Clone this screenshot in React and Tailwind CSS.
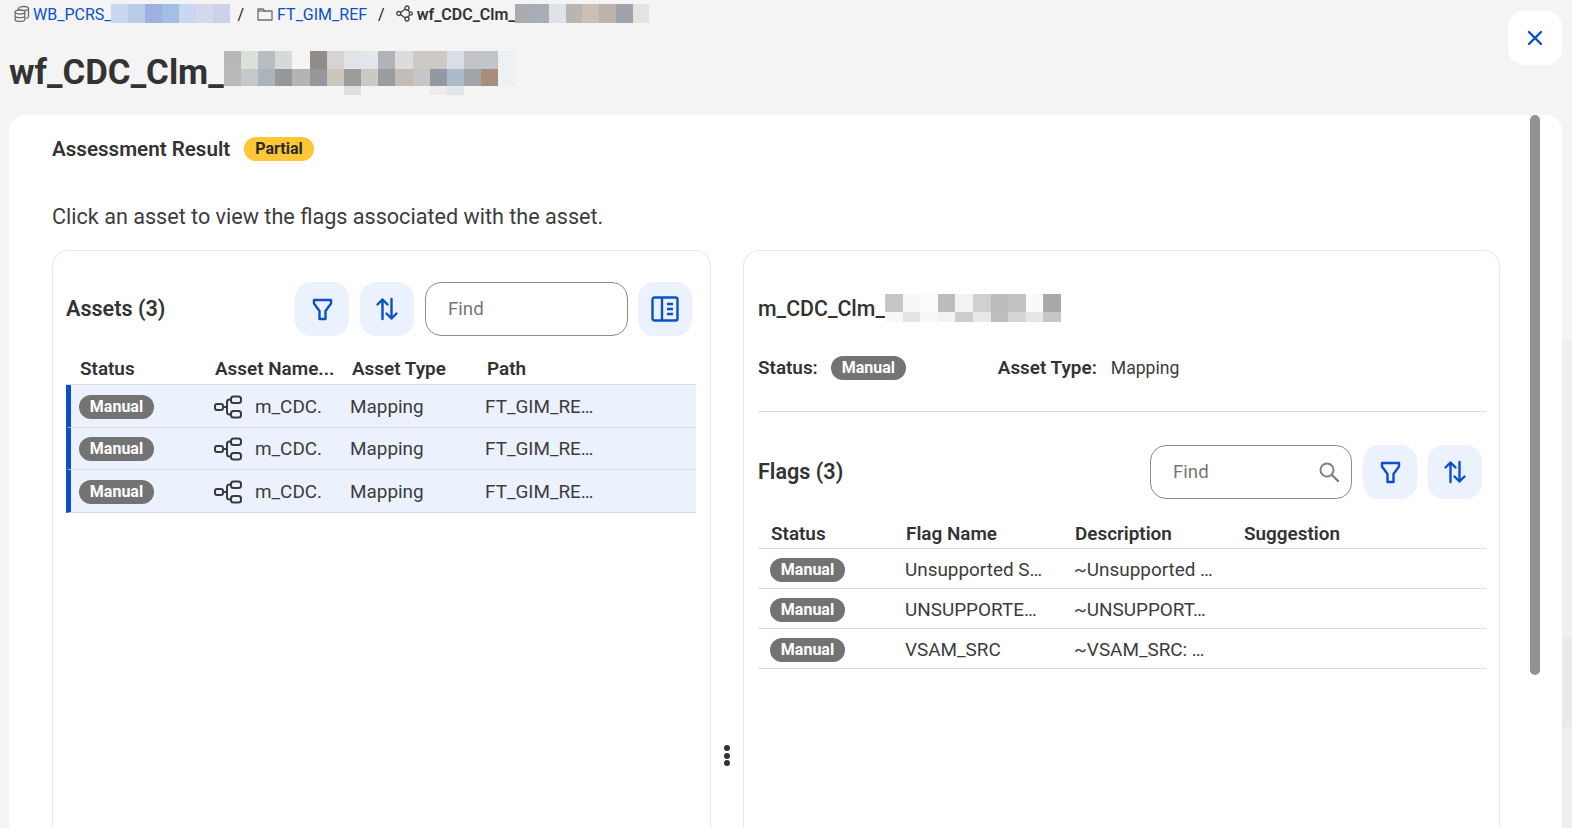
import React from 'react';
import { X } from 'lucide-react';

const titleRows = [
  ['#b7b7b5', '#dbe0d9', '#b6bec0', '#d6d8da', '#f4f4f4', '#918c88', '#d5d3d4', '#e0e3e8', '#e3e6ec', '#b2b3b8', '#dcdcdc', '#cdc9c5', '#cdcac6', '#d8dfe6', '#c2c4c8', '#c0c5c9', '#eef1f4'],
  ['#b9b9b7', '#c4cacc', '#a9b5ba', '#96979b', '#b3b4b6', '#97989a', '#cdc6bb', '#9b9b9b', '#cbc9c2', '#9a9ca0', '#c3bdb5', '#c5c6c8', '#9598a2', '#aabccb', '#a3a5ad', '#a98f7b', '#eef1f4'],
  ['#f4f4f4', '#f4f4f4', '#f4f4f4', '#f4f4f4', '#f4f4f4', '#f4f4f4', '#f4f4f4', '#dedede', '#f4f4f4', '#f4f4f4', '#f4f4f4', '#f4f4f4', '#efebe8', '#e1e4e8', '#f4f4f4', '#f4f4f4', '#f4f4f4'],
];
const titleHeights = ['h-[18px]', 'h-[17px]', 'h-[9px]'];
const crumbOne = ['#c8d8f0', '#b9cde8', '#9db0e0', '#a0c0e8', '#c8d8f0', '#d4d8ea', '#ccd2ea'];
const crumbTwo = ['#a9abb0', '#a8aeb8', '#dfe3e6', '#b9b6b2', '#cdbfb3', '#bdb3aa', '#a0a2ab', '#e4e3df'];
const nameRows = [
  ['#c6c6c6', '#f8f8f8', '#fbfbfb', '#bcbcbc', '#f2f2f2', '#d0d0d0', '#bbbbbb', '#c2c2c2', '#fafafa', '#a9a9a9'],
  ['#f8f8f8', '#e4e4e4', '#f8f8f8', '#f2f2f2', '#cdcdcd', '#e8e8e8', '#bebebe', '#d6d6d6', '#e6e6e6', '#c6c6c6'],
];

const flags = [
  ['Unsupported S…', '~Unsupported …'],
  ['UNSUPPORTE…', '~UNSUPPORT…'],
  ['VSAM_SRC', '~VSAM_SRC: …'],
];

// pixelated patch that hides part of a name
const Blur = ({ colors, className }) => (
  <span className={`flex ${className}`}>
    {colors.map((c, i) => (
      <span key={i} className="flex-1 h-full" style={{ backgroundColor: c }} />
    ))}
  </span>
);

const FilterIcon = () => (
  <svg width="21" height="23" viewBox="0 0 21 23" fill="none" stroke="#0b50c9" strokeWidth="2.4" strokeLinejoin="round">
    <path d="M2 2h17v3.500l-5.500 7.500v8h-6v-8L2 5.500z" />
  </svg>
);

const SortIcon = () => (
  <svg width="24" height="24" viewBox="0 0 24 24" fill="none" stroke="#0b50c9" strokeWidth="2.4" strokeLinecap="round" strokeLinejoin="round">
    <path d="M7.500 22V2.500M2.500 7.500l5-5 5 5" />
    <path d="M16.500 2v19.500M11.500 16.500l5 5 5-5" />
  </svg>
);

const PanelIcon = () => (
  <svg width="28" height="26" viewBox="0 0 28 26" fill="none" stroke="#0b50c9" strokeWidth="2.4">
    <rect x="1.500" y="1.500" width="25" height="23" rx="2" />
    <path d="M11 1.500v23M16 8h6M16 13h6M16 18h6" />
  </svg>
);

const MappingIcon = () => (
  <svg width="28" height="24" viewBox="0 0 28 24" fill="none" stroke="#3a3a3a" strokeWidth="2">
    <rect x="1" y="9" width="8" height="6" rx="2" />
    <rect x="17" y="1.500" width="10" height="6.500" rx="2.500" />
    <rect x="17" y="16" width="10" height="6.500" rx="2.500" />
    <path d="M9 12h4M17 4.500h-1.500a2.500 2.500 0 0 0-2.500 2.500v10a2.500 2.500 0 0 0 2.500 2.500H17" />
  </svg>
);

const SearchIcon = () => (
  <svg width="20" height="20" viewBox="0 0 20 20" fill="none" stroke="#808080" strokeWidth="2" strokeLinecap="round" className="absolute right-[12px] top-[16px]">
    <circle cx="8" cy="8" r="6.500" />
    <path d="M13 13l6 6" strokeWidth="2.400" />
  </svg>
);

const DbIcon = () => (
  <svg width="16" height="17" viewBox="0 0 16 17" fill="none" stroke="#6f6f6f" strokeWidth="1.300">
    <ellipse cx="9.500" cy="3.500" rx="5" ry="2" />
    <path d="M14.500 3.500v8c0 .8-1 1.500-2.500 1.800M4.500 3.500v2" />
    <ellipse cx="6" cy="7" rx="4.800" ry="2" fill="#f4f4f4" />
    <path d="M1.200 7v7.500c0 1.100 2.100 2 4.800 2s4.800-.9 4.800-2V7M1.200 10.700c0 1.100 2.100 2 4.800 2s4.800-.9 4.800-2" />
  </svg>
);

const FolderIcon = () => (
  <svg width="16" height="14" viewBox="0 0 16 14" fill="none" stroke="#6f6f6f" strokeWidth="1.300" strokeLinejoin="round">
    <path d="M1 2h5l1.500 2H15v9H1z" />
    <path d="M1 4h6.500" />
  </svg>
);

const FlowIcon = () => (
  <svg width="17" height="17" viewBox="0 0 17 17" fill="none" stroke="#444444" strokeWidth="1.300">
    <circle cx="2.800" cy="8.500" r="2" />
    <circle cx="11" cy="3" r="2" />
    <circle cx="11" cy="14" r="2" />
    <circle cx="14.700" cy="8.500" r="1.600" />
    <path d="M4.600 7.500L9.300 4M4.600 9.500l4.700 3.500M12 4.800l1.700 2.300M12 12.200l1.700-2.300" />
  </svg>
);

const Pill = () => (
  <span className="inline-flex items-center justify-center w-[75px] h-[24px] rounded-full bg-[#737373] text-white text-[16px] font-bold">
    Manual
  </span>
);

const IconButton = ({ children }) => (
  <button className="w-[54px] h-[54px] shrink-0 rounded-2xl bg-[#ebf1fd] flex items-center justify-center">
    {children}
  </button>
);

const Heading = ({ children, className = '' }) => (
  <span className={`text-[18.900px] font-semibold text-[#333333] whitespace-nowrap ${className}`}>{children}</span>
);

export default function App() {
  return (
    <div className="relative w-[1572px] h-[828px] overflow-hidden bg-[#f4f4f4] font-['Roboto',sans-serif] text-[#3c3c3c] flex flex-col pl-[9px]">
      {/* Breadcrumb */}
      <div className="h-[29px] flex items-start pt-[4px] text-[16px] leading-[19px] shrink-0">
        <span className="flex items-center h-[19px] pl-[5px]">
          <DbIcon />
          <span className="ml-[3px] pt-[2px] text-[#0b50c9]">WB_PCRS_</span>
          <Blur colors={crumbOne} className="w-[119px] h-[19px]" />
        </span>
        <span className="h-[19px] ml-[7px] mr-[13px] pt-[1px] text-[#222222]">/</span>
        <span className="flex items-center h-[19px]">
          <FolderIcon />
          <span className="ml-[4px] pt-[2px] text-[#0b50c9]">FT_GIM_REF</span>
        </span>
        <span className="h-[19px] ml-[11px] mr-[11px] pt-[1px] text-[#222222]">/</span>
        <span className="flex items-center h-[19px]">
          <FlowIcon />
          <span className="ml-[4px] pt-[2px] font-semibold text-[#333333]">wf_CDC_Clm_</span>
          <Blur colors={crumbTwo} className="w-[134px] h-[19px]" />
        </span>
      </div>

      {/* Title */}
      <div className="h-[86px] shrink-0 flex items-start justify-between pr-[10px]">
        <div className="flex items-start pt-[21px]">
          <span className="text-[34.800px] font-bold leading-[44px] text-[#333333]">wf_CDC_Clm_</span>
          <span className="flex flex-col w-[292px] mt-[1px]">
            {titleRows.map((r, i) => (
              <Blur key={i} colors={r} className={titleHeights[i]} />
            ))}
          </span>
        </div>
        <button className="w-[54px] h-[54px] -mt-[18px] rounded-2xl bg-white flex items-center justify-center">
          <X size={24} color="#0b50c9" strokeWidth={2.4} />
        </button>
      </div>

      {/* Card */}
      <div className="relative w-[1553px] flex-1 bg-white rounded-t-2xl pt-[21px] pl-[43px] flex flex-col min-h-0">
        <div className="flex items-center h-[26px]">
          <span className="text-[20.600px] font-semibold text-[#333333]">Assessment Result</span>
          <span className="ml-[14px] h-[24px] px-[11px] rounded-full bg-[#fdc735] text-[#2b2b2b] text-[16px] font-bold flex items-center">
            Partial
          </span>
        </div>
        <p className="mt-[41px] text-[21.600px] leading-[28px] text-[#3c3c3c]">Click an asset to view the flags associated with the asset.</p>

        <div className="mt-[19px] flex flex-1 min-h-0">
          {/* Assets panel */}
          <div className="w-[659px] shrink-0 border border-b-0 border-[#e8e8e8] rounded-t-2xl pt-[31px] pl-[13px]">
            <div className="flex items-center h-[54px]">
              <span className="w-[229px] text-[21.600px] font-semibold text-[#333333]">Assets (3)</span>
              <IconButton><FilterIcon /></IconButton>
              <span className="w-[11px]" />
              <IconButton><SortIcon /></IconButton>
              <span className="w-[11px]" />
              <div className="w-[203px] h-[54px] rounded-2xl border border-[#8c8c8c] flex items-center pl-[22px] text-[18.670px] text-[#767676]">Find</div>
              <span className="w-[10px]" />
              <IconButton><PanelIcon /></IconButton>
            </div>
            <div className="w-[630px]">
              <div className="grid grid-cols-[135px_137px_135px_1fr] h-[49px] items-end pb-[1px] pl-[14px] border-b border-[#dcdcdc]">
                <Heading>Status</Heading>
                <Heading>Asset Name...</Heading>
                <Heading>Asset Type</Heading>
                <Heading>Path</Heading>
              </div>
              {[0, 1, 2].map((i) => (
                <div key={i} className="grid grid-cols-[135px_136px_135px_1fr] items-center h-[42.500px] pt-[2px] pl-[8px] bg-[#ebf1fd] border-l-[5px] border-l-[#0b50c9] border-b border-b-[#dcdcdc] text-[18.900px]">
                  <Pill />
                  <span className="flex items-center">
                    <MappingIcon />
                    <span className="ml-[13px]">m_CDC.</span>
                  </span>
                  <span>Mapping</span>
                  <span>FT_GIM_RE…</span>
                </div>
              ))}
            </div>
          </div>

          {/* Splitter */}
          <div className="w-[32px] shrink-0 flex flex-col items-center gap-[1.500px] pt-[495px]">
            <span className="w-[6px] h-[6px] rounded-full bg-[#333333]" />
            <span className="w-[6px] h-[6px] rounded-full bg-[#333333]" />
            <span className="w-[6px] h-[6px] rounded-full bg-[#333333]" />
          </div>

          {/* Detail panel */}
          <div className="w-[757px] shrink-0 border border-b-0 border-[#e8e8e8] rounded-t-2xl pl-[14px] pr-[13px] pt-[43px]">
            <div className="flex items-start h-[31px]">
              <span className="text-[21.330px] font-medium leading-[30px] text-[#333333]">m_CDC_Clm_</span>
              <span className="flex flex-col w-[176px]">
                {nameRows.map((r, i) => (
                  <Blur key={i} colors={r} className={i === 0 ? 'h-[18px]' : 'h-[10px]'} />
                ))}
              </span>
            </div>
            <div className="flex items-center mt-[30px] h-[26px] pb-0">
              <Heading>Status:</Heading>
              <span className="ml-[13px] w-[167px]"><Pill /></span>
              <Heading>Asset Type:</Heading>
              <span className="ml-[14px] text-[17.600px]">Mapping</span>
            </div>
            <div className="mt-[30px] border-t border-[#dcdcdc]" />

            <div className="flex items-center h-[54px] mt-[33px] pr-[4px]">
              <span className="flex-1 text-[21.600px] font-semibold text-[#333333]">Flags (3)</span>
              <div className="relative w-[202px] h-[54px] rounded-2xl border border-[#8c8c8c] flex items-center pl-[22px] text-[18.670px] text-[#767676]">
                Find
                <SearchIcon />
              </div>
              <span className="w-[11px]" />
              <IconButton><FilterIcon /></IconButton>
              <span className="w-[11px]" />
              <IconButton><SortIcon /></IconButton>
            </div>

            <div className="grid grid-cols-[135px_169px_169px_1fr] h-[50px] items-end pl-[13px] border-b border-[#dcdcdc]">
              <Heading>Status</Heading>
              <Heading>Flag Name</Heading>
              <Heading>Description</Heading>
              <Heading>Suggestion</Heading>
            </div>
            {flags.map((f, i) => (
              <div key={i} className="grid grid-cols-[135px_169px_1fr] items-center h-[40px] pt-[2px] pl-[12px] border-b border-[#dcdcdc] text-[18.900px]">
                <Pill />
                <span className="pt-[1px]">{f[0]}</span>
                <span className="pt-[1px]">{f[1]}</span>
              </div>
            ))}
          </div>
        </div>

        {/* Scrollbar */}
        <div className="absolute left-[1521px] top-0 w-[10px] h-[560px] rounded-full bg-[#929292]" />
      </div>

      {/* Faint shading along the right edge */}
      <div className="absolute right-0 top-0 w-[10px] h-full bg-[linear-gradient(#f4f4f4_341px,#efefef_341px,#efefef_638px,#e9e9e9_638px,#e9e9e9_727px,#eeeeee_727px)]" />
    </div>
  );
}
